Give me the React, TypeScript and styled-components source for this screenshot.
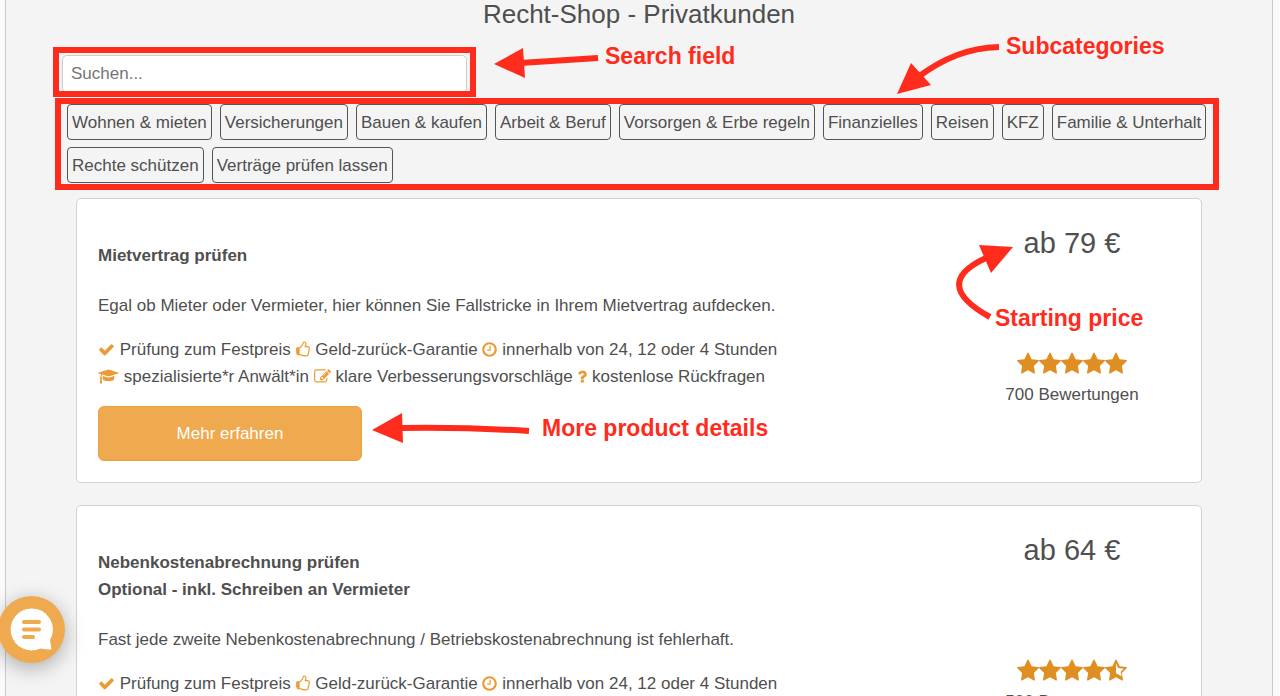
import React from 'react';
import styled, { createGlobalStyle } from 'styled-components';

const RED = '#ff2b1c';
const ORANGE = '#ec9a33';

const GlobalStyle = createGlobalStyle`
  *, *::before, *::after { box-sizing: border-box; }
  body {
    margin: 0;
    background: #fafafa;
    color: #4f4f4f;
    font-family: "Liberation Sans", Arial, sans-serif;
    font-size: 17px;
    line-height: 27px;
  }
`;

const Screen = styled.div`
  position: relative;
`;

const Page = styled.main`
  display: flow-root;
  margin: 0 7px 0 5px;
  padding: 0 56px;
  background: #f4f4f4;
  border: 1px solid #cacaca;
  border-width: 0 1px;
`;

const PageTitle = styled.h1`
  margin: 0;
  font-size: 26px;
  line-height: 28px;
  font-weight: 400;
  text-align: center;
`;

const SearchBox = styled.div`
  position: relative;
  width: 405px;
  margin-top: 27px;
`;

const SearchInput = styled.input`
  display: block;
  width: 100%;
  height: 38px;
  padding: 0 8px;
  border: 1px solid #ccc;
  border-radius: 5px;
  background: #fff;
  color: inherit;
  font: inherit;
  &::placeholder { color: #757575; opacity: 1; }
`;

const Highlight = styled.div<{ $inset: string }>`
  position: absolute;
  inset: ${(p) => p.$inset};
  border: 6px solid ${RED};
  pointer-events: none;
`;

const Categories = styled.nav`
  position: relative;
  display: flex;
  flex-wrap: wrap;
  gap: 7px 8px;
  margin: 11px 0 0 5px;
`;

const CategoryButton = styled.button`
  height: 36px;
  padding: 0 4px;
  border: 1px solid #555;
  border-radius: 4px;
  background: transparent;
  color: inherit;
  font: inherit;
  white-space: nowrap;
`;

const ProductList = styled.div`
  display: flex;
  flex-direction: column;
  gap: 22px;
  margin: 15px 14px 22px;
`;

const Card = styled.article`
  display: flex;
  border: 1px solid #d2d2d2;
  border-radius: 5px;
  background: #fff;
`;

const CardBody = styled.div`
  flex: 1;
  padding: 43px 0 21px 21px;
`;

const CardTitle = styled.h2`
  margin: 0;
  font-size: 17px;
  line-height: 27px;
  white-space: pre-line;
`;

const Description = styled.p`
  margin: 23px 0 17px;
`;

const Features = styled.ul`
  margin: 0 0 16px;
  padding: 0;
  list-style: none;
`;

const FeatureRow = styled.li`
  height: 27px;
  white-space: nowrap;
`;

const FeatureIcon = styled.svg`
  height: 17px;
  fill: ${ORANGE};
  vertical-align: -3px;
`;

const MoreButton = styled.button`
  display: block;
  width: 264px;
  height: 55px;
  border: 1px solid #eea041;
  border-radius: 6px;
  background: #efa94f;
  color: #fff;
  font: inherit;
`;

const CardAside = styled.div`
  width: 258px;
  padding-top: 26px;
  text-align: center;
`;

const Price = styled.div`
  font-size: 29px;
  line-height: 36px;
`;

const Stars = styled.div`
  display: flex;
  justify-content: center;
  margin: 91px 0 5px;
`;

const StarIcon = styled.svg`
  width: 22px;
  height: 24px;
  fill: #df8f22;
`;

const ChatButton = styled.button`
  position: fixed;
  left: -2px;
  bottom: 33px;
  width: 67px;
  height: 67px;
  padding: 0;
  border: 0;
  border-radius: 50%;
  background: #efa94f;
  box-shadow: 0 5px 20px rgba(0, 0, 0, 0.3);
  svg { display: block; }
`;

const ArrowLayer = styled.svg`
  position: absolute;
  inset: 0;
  width: 100%;
  height: 100%;
  pointer-events: none;
  fill: ${RED};
  .shaft { fill: none; stroke: ${RED}; stroke-width: 6; }
`;

const Note = styled.span<{ $x: number; $y: number }>`
  position: absolute;
  left: ${(p) => p.$x}px;
  top: ${(p) => p.$y}px;
  color: ${RED};
  font-size: 23px;
  line-height: 28px;
  font-weight: 700;
  white-space: nowrap;
`;

const ICONS = {
  check: {
    box: '0 0 1792 1792',
    width: 17,
    d: 'M1671 566q0 40-28 68l-724 724-136 136q-28 28-68 28t-68-28l-136-136-362-362q-28-28-28-68t28-68l136-136q28-28 68-28t68 28l294 295 656-657q28-28 68-28t68 28l136 136q28 28 28 68z',
  },
  thumb: {
    box: '0 0 1664 1792',
    width: 15,
    d: 'M256 1408q0-26-19-45t-45-19-45 19-19 45 19 45 45 19 45-19 19-45zm1280-640q0-51-39-89.5t-89-38.5h-352q0-58 48-159.5t48-160.5q0-98-32-145t-128-47q-26 26-38 85t-30.5 125.5-59.5 109.5q-22 23-77 91-4 5-23 30t-31.5 41-34.5 42.5-40 44-38.5 35.5-40 27-35.5 9h-32v640h32q13 0 31.5 3t33 6.5 38 11 35 11.5 35.5 12.5 29 10.5q211 73 342 73h121q192 0 192-167 0-26-5-56 30-16 47.5-52.5t17.5-73.5-18-69q53-50 53-119 0-25-10-55.5t-25-47.5q32-1 53.5-47t21.5-81zm128-1q0 89-49 163 9 33 9 69 0 77-38 144 3 21 3 43 0 101-60 178 1 139-85 219.5t-227 80.5h-129q-96 0-189.5-22.5t-216.5-65.5q-116-40-138-40h-288q-53 0-90.5-37.5t-37.5-90.5v-640q0-53 37.5-90.5t90.5-37.5h274q36-24 137-155 58-75 107-128 24-25 35.5-85.5t30.5-126.5 62-108q39-37 90-37 84 0 151 32.5t102 101.5 35 186q0 93-48 192h176q104 0 180 76t76 179z',
  },
  clock: {
    box: '128 0 1536 1792',
    width: 15,
    d: 'M1024 544v448q0 14-9 23t-23 9h-320q-14 0-23-9t-9-23v-64q0-14 9-23t23-9h224v-352q0-14 9-23t23-9h64q14 0 23 9t9 23zm416 352q0-148-73-273t-198-198-273-73-273 73-198 198-73 273 73 273 198 198 273 73 273-73 198-198 73-273zm224 0q0 209-103 385.5t-279.5 279.5-385.5 103-385.5-103-279.5-279.5-103-385.5 103-385.5 279.5-279.5 385.5-103 385.5 103 279.5 279.5 103 385.5z',
  },
  cap: {
    box: '0 0 2304 1792',
    width: 21,
    d: 'M1774 836l18 316q4 69-82 128t-235 93.5-323 34.5-323-34.5-235-93.5-82-128l18-316 574 181q22 7 48 7t48-7zm530-324q0 23-22 31l-1120 352q-4 1-10 1t-10-1l-652-206q-43 34-71 111.5t-34 178.5q63 36 63 109 0 69-58 107l58 433q2 14-8 25-9 11-24 11h-192q-15 0-24-11-10-11-8-25l58-433q-58-38-58-107 0-73 65-111 11-207 98-330l-333-104q-22-8-22-31t22-31l1120-352q4-1 10-1t10 1l1120 352q22 8 22 31z',
  },
  edit: {
    box: '0 0 1792 1792',
    width: 17,
    d: 'M888 1184l116-116-152-152-116 116v56h96v96h56zm440-720q-16-16-33 1l-350 350q-17 17-1 33t33-1l350-350q17-17 1-33zm80 594v190q0 119-84.5 203.5t-203.5 84.5h-832q-119 0-203.5-84.5t-84.5-203.5v-832q0-119 84.5-203.5t203.5-84.5h832q63 0 117 25 15 7 18 23 3 17-9 29l-49 49q-14 14-32 8-23-6-45-6h-832q-66 0-113 47t-47 113v832q0 66 47 113t113 47h832q66 0 113-47t47-113v-126q0-13 9-22l64-64q15-15 35-7t20 29zm-96-738l288 288-672 672h-288v-288zm444 132l-92 92-288-288 92-92q28-28 68-28t68 28l152 152q28 28 28 68t-28 68z',
  },
  question: {
    box: '384 0 1024 1792',
    width: 10,
    d: 'M1088 1256v240q0 16-12 28t-28 12h-240q-16 0-28-12t-12-28v-240q0-16 12-28t28-12h240q16 0 28 12t12 28zm316-600q0 54-15.5 101t-35 76.5-55 59.5-57.5 43.5-61 35.5q-41 23-68.5 65t-27.5 67q0 17-12 32.5t-28 15.5h-240q-15 0-25.5-18.5t-10.5-37.5v-45q0-83 65-156.5t143-108.5q59-27 84-56t25-76q0-42-46.5-74t-107.5-32q-65 0-108 29-35 25-107 115-13 16-31 16-12 0-25-8l-164-125q-13-10-15.5-25t5.5-28q160-266 464-266 80 0 161 31t146 83 106 127.5 41 158.5z',
  },
};

type IconName = keyof typeof ICONS;

const STAR =
  'M1728 647q0 22-26 48l-363 354 86 500q1 7 1 20 0 21-10.5 35.5t-30.5 14.5q-19 0-40-12l-449-236-449 236q-22 12-40 12-21 0-31.5-14.5t-10.5-35.5q0-6 2-20l86-500-364-354q-25-27-25-48 0-37 56-46l502-73 225-455q19-41 49-41t49 41l225 455 502 73q56 9 56 46z';
const STAR_HOLE = 'M896 330L1060 663l428 62-238 232 56 327-410-215z';

function Icon({ name }: { name: IconName }) {
  const icon = ICONS[name];
  return (
    <FeatureIcon viewBox={icon.box} width={icon.width} aria-hidden="true">
      <path d={icon.d} />
    </FeatureIcon>
  );
}

function Star({ half }: { half: boolean }) {
  return (
    <StarIcon viewBox="64 0 1664 1792" aria-hidden="true">
      <path fillRule="evenodd" d={half ? STAR + STAR_HOLE : STAR} />
    </StarIcon>
  );
}

const CATEGORIES = [
  'Wohnen & mieten',
  'Versicherungen',
  'Bauen & kaufen',
  'Arbeit & Beruf',
  'Vorsorgen & Erbe regeln',
  'Finanzielles',
  'Reisen',
  'KFZ',
  'Familie & Unterhalt',
  'Rechte schützen',
  'Verträge prüfen lassen',
];

const FEATURES: [IconName, string][][] = [
  [
    ['check', 'Prüfung zum Festpreis'],
    ['thumb', 'Geld-zurück-Garantie'],
    ['clock', 'innerhalb von 24, 12 oder 4 Stunden'],
  ],
  [
    ['cap', 'spezialisierte*r Anwält*in'],
    ['edit', 'klare Verbesserungsvorschläge'],
    ['question', 'kostenlose Rückfragen'],
  ],
];

const PRODUCTS = [
  {
    title: 'Mietvertrag prüfen',
    text: 'Egal ob Mieter oder Vermieter, hier können Sie Fallstricke in Ihrem Mietvertrag aufdecken.',
    price: 'ab 79 €',
    stars: 5,
    reviews: '700 Bewertungen',
  },
  {
    title: 'Nebenkostenabrechnung prüfen\nOptional - inkl. Schreiben an Vermieter',
    text: 'Fast jede zweite Nebenkostenabrechnung / Betriebskostenabrechnung ist fehlerhaft.',
    price: 'ab 64 €',
    stars: 4.5,
    reviews: '500 Bewertungen',
  },
];

function Product({ product }: { product: (typeof PRODUCTS)[number] }) {
  return (
    <Card>
      <CardBody>
        <CardTitle>{product.title}</CardTitle>
        <Description>{product.text}</Description>
        <Features>
          {FEATURES.map((row, i) => (
            <FeatureRow key={i}>
              {row.map(([name, label]) => (
                <React.Fragment key={name}>
                  <Icon name={name} /> {label}{' '}
                </React.Fragment>
              ))}
            </FeatureRow>
          ))}
        </Features>
        <MoreButton type="button">Mehr erfahren</MoreButton>
      </CardBody>
      <CardAside>
        <Price>{product.price}</Price>
        <Stars role="img" aria-label={`${product.stars} / 5`}>
          {[1, 2, 3, 4, 5].map((n) => (
            <Star key={n} half={n > product.stars} />
          ))}
        </Stars>
        <div>{product.reviews}</div>
      </CardAside>
    </Card>
  );
}

export default function App() {
  return (
    <Screen>
      <GlobalStyle />
      <Page>
        <PageTitle>Recht-Shop - Privatkunden</PageTitle>
        <SearchBox>
          <SearchInput type="search" placeholder="Suchen..." aria-label="Suchen" />
          <Highlight $inset="-8px -9px -4px" />
        </SearchBox>
        <Categories>
          {CATEGORIES.map((name) => (
            <CategoryButton type="button" key={name}>
              {name}
            </CategoryButton>
          ))}
          <Highlight $inset="-6px -3px -7px -12px" />
        </Categories>
        <ProductList>
          {PRODUCTS.map((product) => (
            <Product product={product} key={product.title} />
          ))}
        </ProductList>
      </Page>
      <ArrowLayer aria-hidden="true">
        <path className="shaft" d="M598 58L520 63" />
        <path d="M494 64L523 48L525 78z" />
        <path className="shaft" d="M999 47C968 48 944 58 918 77" />
        <path d="M897 94L911 63L931 85z" />
        <path className="shaft" d="M990 317C950 295 949 275 986 258" />
        <path d="M1013 247L979 245L991 273z" />
        <path className="shaft" d="M529 431Q465 427 400 428" />
        <path d="M372 430L402 413L403 443z" />
      </ArrowLayer>
      <Note $x={605} $y={42}>Search field</Note>
      <Note $x={1006} $y={32}>Subcategories</Note>
      <Note $x={995} $y={304}>Starting price</Note>
      <Note $x={542} $y={414}>More product details</Note>
      <ChatButton type="button" aria-label="Chat">
        <svg width="67" height="67" viewBox="0 0 67 67" aria-hidden="true">
          <path
            fill="#fff"
            d="M33.500 12.500a21 21 0 1 0 9 40q5 1 11 1l-1.500-9.500A21 21 0 0 0 33.500 12.500z"
          />
          <path
            d="M26 26h15M26 33.500h15M26 41h9"
            stroke="#efa94f"
            strokeWidth="4"
            strokeLinecap="round"
          />
        </svg>
      </ChatButton>
    </Screen>
  );
}
